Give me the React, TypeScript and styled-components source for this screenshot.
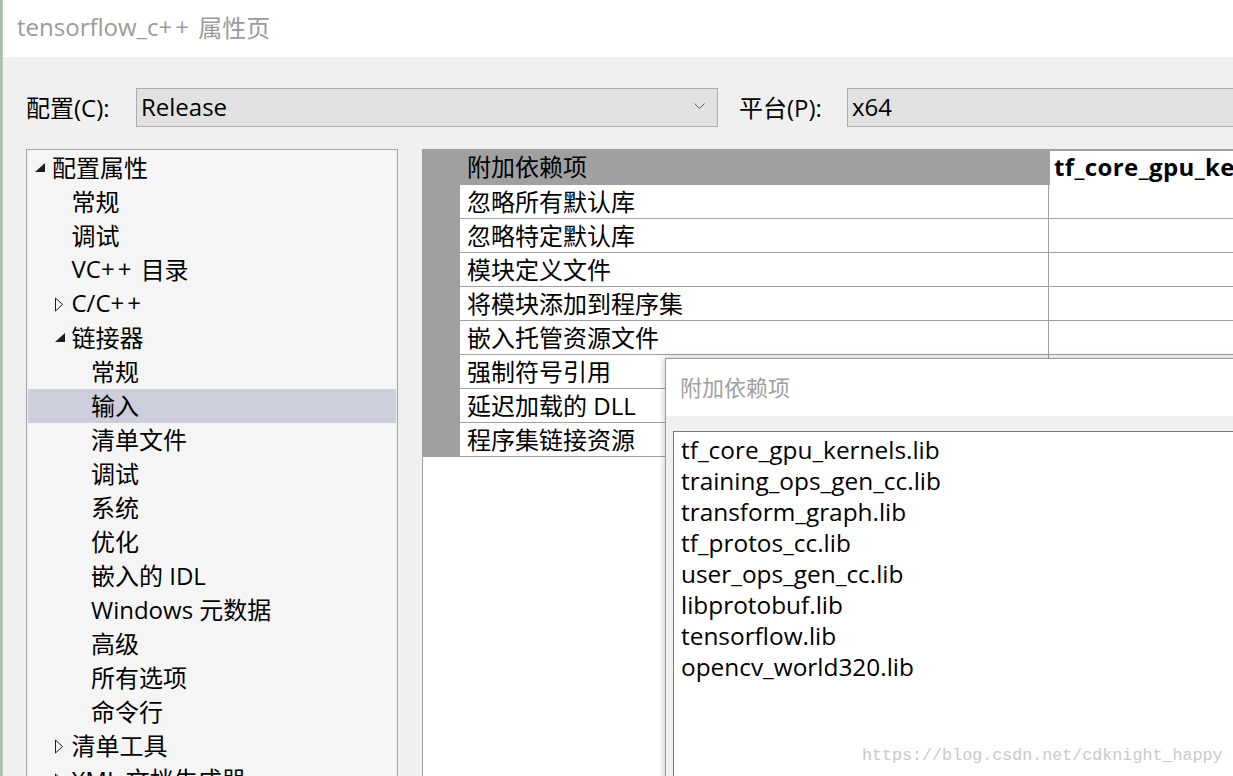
import React from 'react';
import styled, { createGlobalStyle } from 'styled-components';

const GlobalStyle = createGlobalStyle`
  body {
    margin: 0;
    font-family: "Open Sans", "Noto Sans CJK SC", sans-serif;
    color: #000;
  }
`;

const FONT = `"Open Sans", "Noto Sans CJK SC", sans-serif`;

/* 左侧残留的桌面边缘 + 窗口 */
const Window = styled.div`
  position: relative;
  width: 1233px;
  height: 776px;
  overflow: hidden;
  box-sizing: border-box;
  padding-left: 3px;
  box-shadow: inset 2px 0 0 #a6c4a6, inset 3px 0 0 #c2c2c2;
  background: #f0f0f0;
  font-family: ${FONT};
  font-size: 24px;
`;

const TitleBar = styled.div`
  height: 57px;
  box-sizing: border-box;
  padding: 0 0 4px 14px;
  background: #fff;
  display: flex;
  align-items: center;
  color: #9b9b9b;
  font-size: 24px;
  white-space: pre;
`;

/* Segoe UI 里 "++" 间距较宽 */
const Plus = styled.span`
  letter-spacing: 3px;
`;

const Body = styled.div`
  padding: 31px 0 0 23px;
`;

const ConfigRow = styled.div`
  display: flex;
  align-items: center;
  height: 39px;
`;

const FieldLabel = styled.span<{ $width: number; $gap?: number }>`
  width: ${(p) => p.$width}px;
  margin-left: ${(p) => p.$gap ?? 0}px;
  flex-shrink: 0;
  white-space: nowrap;
  padding-bottom: 2px;
`;

const Combo = styled.div<{ $width: number }>`
  width: ${(p) => p.$width}px;
  height: 39px;
  flex-shrink: 0;
  box-sizing: border-box;
  border: 1px solid #adadad;
  background: #e1e1e1;
  display: flex;
  align-items: center;
  padding: 0 0 2px 4px;
`;

const Chevron = styled.svg`
  margin-left: auto;
  margin-right: 12px;
`;

const Main = styled.div`
  display: flex;
  gap: 24px;
  margin-top: 22px;
`;

const Tree = styled.div`
  width: 372px;
  height: 700px;
  flex-shrink: 0;
  box-sizing: border-box;
  border: 1px solid #a0a0a0;
  background: #f5f5f5;
  padding-top: 1px;
`;

const TreeRow = styled.div<{ $level: number; $selected?: boolean }>`
  height: 34px;
  box-sizing: border-box;
  margin: 0 1px;
  display: flex;
  align-items: center;
  padding: 0 0 3px ${(p) => 6 + p.$level * 19.5}px;
  background: ${(p) => (p.$selected ? '#cccedb' : 'transparent')};
  white-space: pre;
`;

const Expander = styled.span`
  width: 18px;
  height: 34px;
  flex-shrink: 0;
  display: flex;
  align-items: center;
  margin-top: 3px;
`;

const GridPanel = styled.div`
  flex: 1;
  height: 700px;
  border-left: 1px solid #a0a0a0;
  background: #fff;
`;

const HeaderRow = styled.div`
  display: flex;
  height: 36px;
  background: #a0a0a0;
`;

const Gutter = styled.div`
  width: 37px;
  flex-shrink: 0;
  background: #a0a0a0;
`;

const NameCell = styled.div<{ $header?: boolean }>`
  width: ${(p) => (p.$header ? 590 : 589)}px;
  flex-shrink: 0;
  box-sizing: border-box;
  padding: 0 0 3px 7px;
  display: flex;
  align-items: center;
  background: ${(p) => (p.$header ? 'transparent' : '#fff')};
  border-right: ${(p) => (p.$header ? 'none' : '1px solid #a0a0a0')};
  border-bottom: ${(p) => (p.$header ? 'none' : '1px solid #a0a0a0')};
  white-space: nowrap;
`;

const ValueCell = styled.div<{ $header?: boolean }>`
  flex: 1;
  background: #fff;
  margin-top: ${(p) => (p.$header ? 2 : 0)}px;
  padding: 0 0 3px 4px;
  display: flex;
  align-items: center;
  font-weight: ${(p) => (p.$header ? 700 : 400)};
  letter-spacing: ${(p) => (p.$header ? '0.4px' : '0')};
  border-bottom: ${(p) => (p.$header ? 'none' : '1px solid #a0a0a0')};
  white-space: nowrap;
  overflow: hidden;
`;

const GridRow = styled.div`
  display: flex;
  height: 34px;
`;

/* 弹出的“附加依赖项”编辑框 */
const Dialog = styled.div`
  position: absolute;
  left: 665px;
  top: 358px;
  width: 620px;
  height: 480px;
  border: 1px solid #9a9a9a;
  background: #f0f0f0;
  box-shadow: 0 0 7px rgba(0, 0, 0, 0.28);
  display: flex;
  flex-direction: column;
`;

const DialogTitle = styled.div`
  height: 57px;
  box-sizing: border-box;
  background: #fff;
  display: flex;
  align-items: center;
  padding: 0 0 3px 14px;
  color: #a0a0a0;
  font-size: 22px;
`;

const TextBox = styled.div`
  margin: 15px 0 0 7px;
  flex: 1;
  background: #fff;
  border-top: 1px solid #7a7a7a;
  border-left: 1px solid #7a7a7a;
  padding: 2px 7px;
  line-height: 31px;
  font-size: 24.4px;
`;

const Line = styled.div`
  white-space: nowrap;
`;

const Watermark = styled.div`
  position: absolute;
  left: 862px;
  top: 746px;
  font-family: "Liberation Mono", monospace;
  font-size: 16.7px;
  color: #c9c9c9;
  white-space: nowrap;
`;

type Node = { label: React.ReactNode; level: number; state?: 'open' | 'closed'; selected?: boolean };

const treeItems: Node[] = [
  { label: '配置属性', level: 0, state: 'open' },
  { label: '常规', level: 1 },
  { label: '调试', level: 1 },
  { label: <>VC<Plus>++</Plus> 目录</>, level: 1 },
  { label: <>C/C<Plus>++</Plus></>, level: 1, state: 'closed' },
  { label: '链接器', level: 1, state: 'open' },
  { label: '常规', level: 2 },
  { label: '输入', level: 2, selected: true },
  { label: '清单文件', level: 2 },
  { label: '调试', level: 2 },
  { label: '系统', level: 2 },
  { label: '优化', level: 2 },
  { label: '嵌入的 IDL', level: 2 },
  { label: 'Windows 元数据', level: 2 },
  { label: '高级', level: 2 },
  { label: '所有选项', level: 2 },
  { label: '命令行', level: 2 },
  { label: '清单工具', level: 1, state: 'closed' },
  { label: 'XML 文档生成器', level: 1, state: 'closed' },
];

const gridRows = [
  '忽略所有默认库',
  '忽略特定默认库',
  '模块定义文件',
  '将模块添加到程序集',
  '嵌入托管资源文件',
  '强制符号引用',
  '延迟加载的 DLL',
  '程序集链接资源',
];

const libs = [
  'tf_core_gpu_kernels.lib',
  'training_ops_gen_cc.lib',
  'transform_graph.lib',
  'tf_protos_cc.lib',
  'user_ops_gen_cc.lib',
  'libprotobuf.lib',
  'tensorflow.lib',
  'opencv_world320.lib',
];

const ExpandIcon = ({ state }: { state?: 'open' | 'closed' }) => {
  if (state === 'open') {
    return (
      <svg width="12" height="10" viewBox="0 0 12 10">
        <polygon points="11,0 11,9 1,9" fill="#1e1e1e" />
      </svg>
    );
  }
  if (state === 'closed') {
    return (
      <svg width="10" height="15" viewBox="0 0 10 15">
        <polygon points="1.5,1 8.5,7.5 1.5,14" fill="none" stroke="#1e1e1e" strokeWidth="1" />
      </svg>
    );
  }
  return null;
};

export default function App() {
  return (
    <Window>
      <GlobalStyle />
      <TitleBar>
        tensorflow_c<Plus>++</Plus> 属性页
      </TitleBar>
      <Body>
        <ConfigRow>
          <FieldLabel $width={110}>配置(C):</FieldLabel>
          <Combo $width={582}>
            Release
            <Chevron width="11" height="7" viewBox="0 0 11 7">
              <polyline points="0.5,0.5 5.5,5.5 10.5,0.5" fill="none" stroke="#5a5a5a" strokeWidth="1" />
            </Chevron>
          </Combo>
          <FieldLabel $width={108} $gap={21}>平台(P):</FieldLabel>
          <Combo $width={420}>x64</Combo>
        </ConfigRow>
        <Main>
          <Tree>
            {treeItems.map((item, i) => (
              <TreeRow key={i} $level={item.level} $selected={item.selected}>
                <Expander>
                  <ExpandIcon state={item.state} />
                </Expander>
                {item.label}
              </TreeRow>
            ))}
          </Tree>
          <GridPanel>
            <HeaderRow>
              <Gutter />
              <NameCell $header>附加依赖项</NameCell>
              <ValueCell $header>tf_core_gpu_kernels.lib;training_ops_gen_cc.lib</ValueCell>
            </HeaderRow>
            {gridRows.map((name) => (
              <GridRow key={name}>
                <Gutter />
                <NameCell>{name}</NameCell>
                <ValueCell />
              </GridRow>
            ))}
          </GridPanel>
        </Main>
      </Body>
      <Dialog>
        <DialogTitle>附加依赖项</DialogTitle>
        <TextBox>
          {libs.map((lib) => (
            <Line key={lib}>{lib}</Line>
          ))}
        </TextBox>
      </Dialog>
      <Watermark>https://blog.csdn.net/cdknight_happy</Watermark>
    </Window>
  );
}
